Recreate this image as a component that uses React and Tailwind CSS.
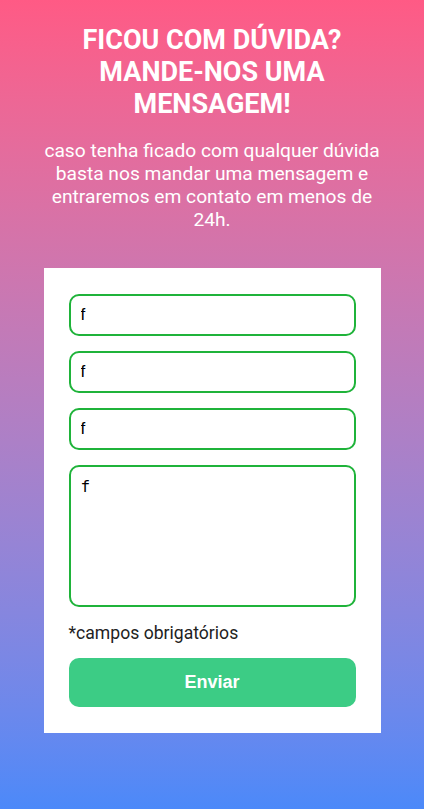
export default function App() {
  return (
    <div className="min-h-[809px] w-full bg-gradient-to-b from-[#ff5a85] to-[#4b89f9] flex flex-col items-center pt-[24px] font-['Roboto',sans-serif] text-white">
      <h1 className="w-[320px] text-center text-[27px] leading-[32px] font-bold uppercase">
        Ficou com dúvida? Mande-nos uma mensagem!
      </h1>
      <p className="mt-[19px] w-[345px] text-center text-[19.2px] leading-[23px]">
        caso tenha ficado com qualquer dúvida basta nos mandar uma mensagem e entraremos em contato em menos de 24h.
      </p>
      <form className="mt-[37px] w-[337px] bg-white px-[25px] pt-[26px] pb-[26px] flex flex-col">
        <input
          defaultValue="f"
          className="h-[42px] w-full rounded-[10px] border-2 border-[#1fb33a] px-[10px] text-[17px] text-black font-['Liberation_Sans',sans-serif] outline-none"
        />
        <input
          defaultValue="f"
          className="mt-[15px] h-[42px] w-full rounded-[10px] border-2 border-[#1fb33a] px-[10px] text-[17px] text-black font-['Liberation_Sans',sans-serif] outline-none"
        />
        <input
          defaultValue="f"
          className="mt-[15px] h-[42px] w-full rounded-[10px] border-2 border-[#1fb33a] px-[10px] text-[17px] text-black font-['Liberation_Sans',sans-serif] outline-none"
        />
        <textarea
          defaultValue="f"
          className="mt-[15px] h-[142px] w-full resize-none rounded-[10px] border-2 border-[#1fb33a] px-[10px] py-[10px] text-[16px] leading-[20px] text-black font-['DejaVu_Sans_Mono',monospace] outline-none"
        />
        <span className="mt-[15px] text-[17.6px] leading-[22px] text-[#222]">*campos obrigatórios</span>
        <button
          type="button"
          className="mt-[14px] h-[49px] w-full rounded-[10px] bg-[#3ccc85] text-white text-[18px] font-bold font-['Liberation_Sans',sans-serif]"
        >
          Enviar
        </button>
      </form>
    </div>
  )
}
